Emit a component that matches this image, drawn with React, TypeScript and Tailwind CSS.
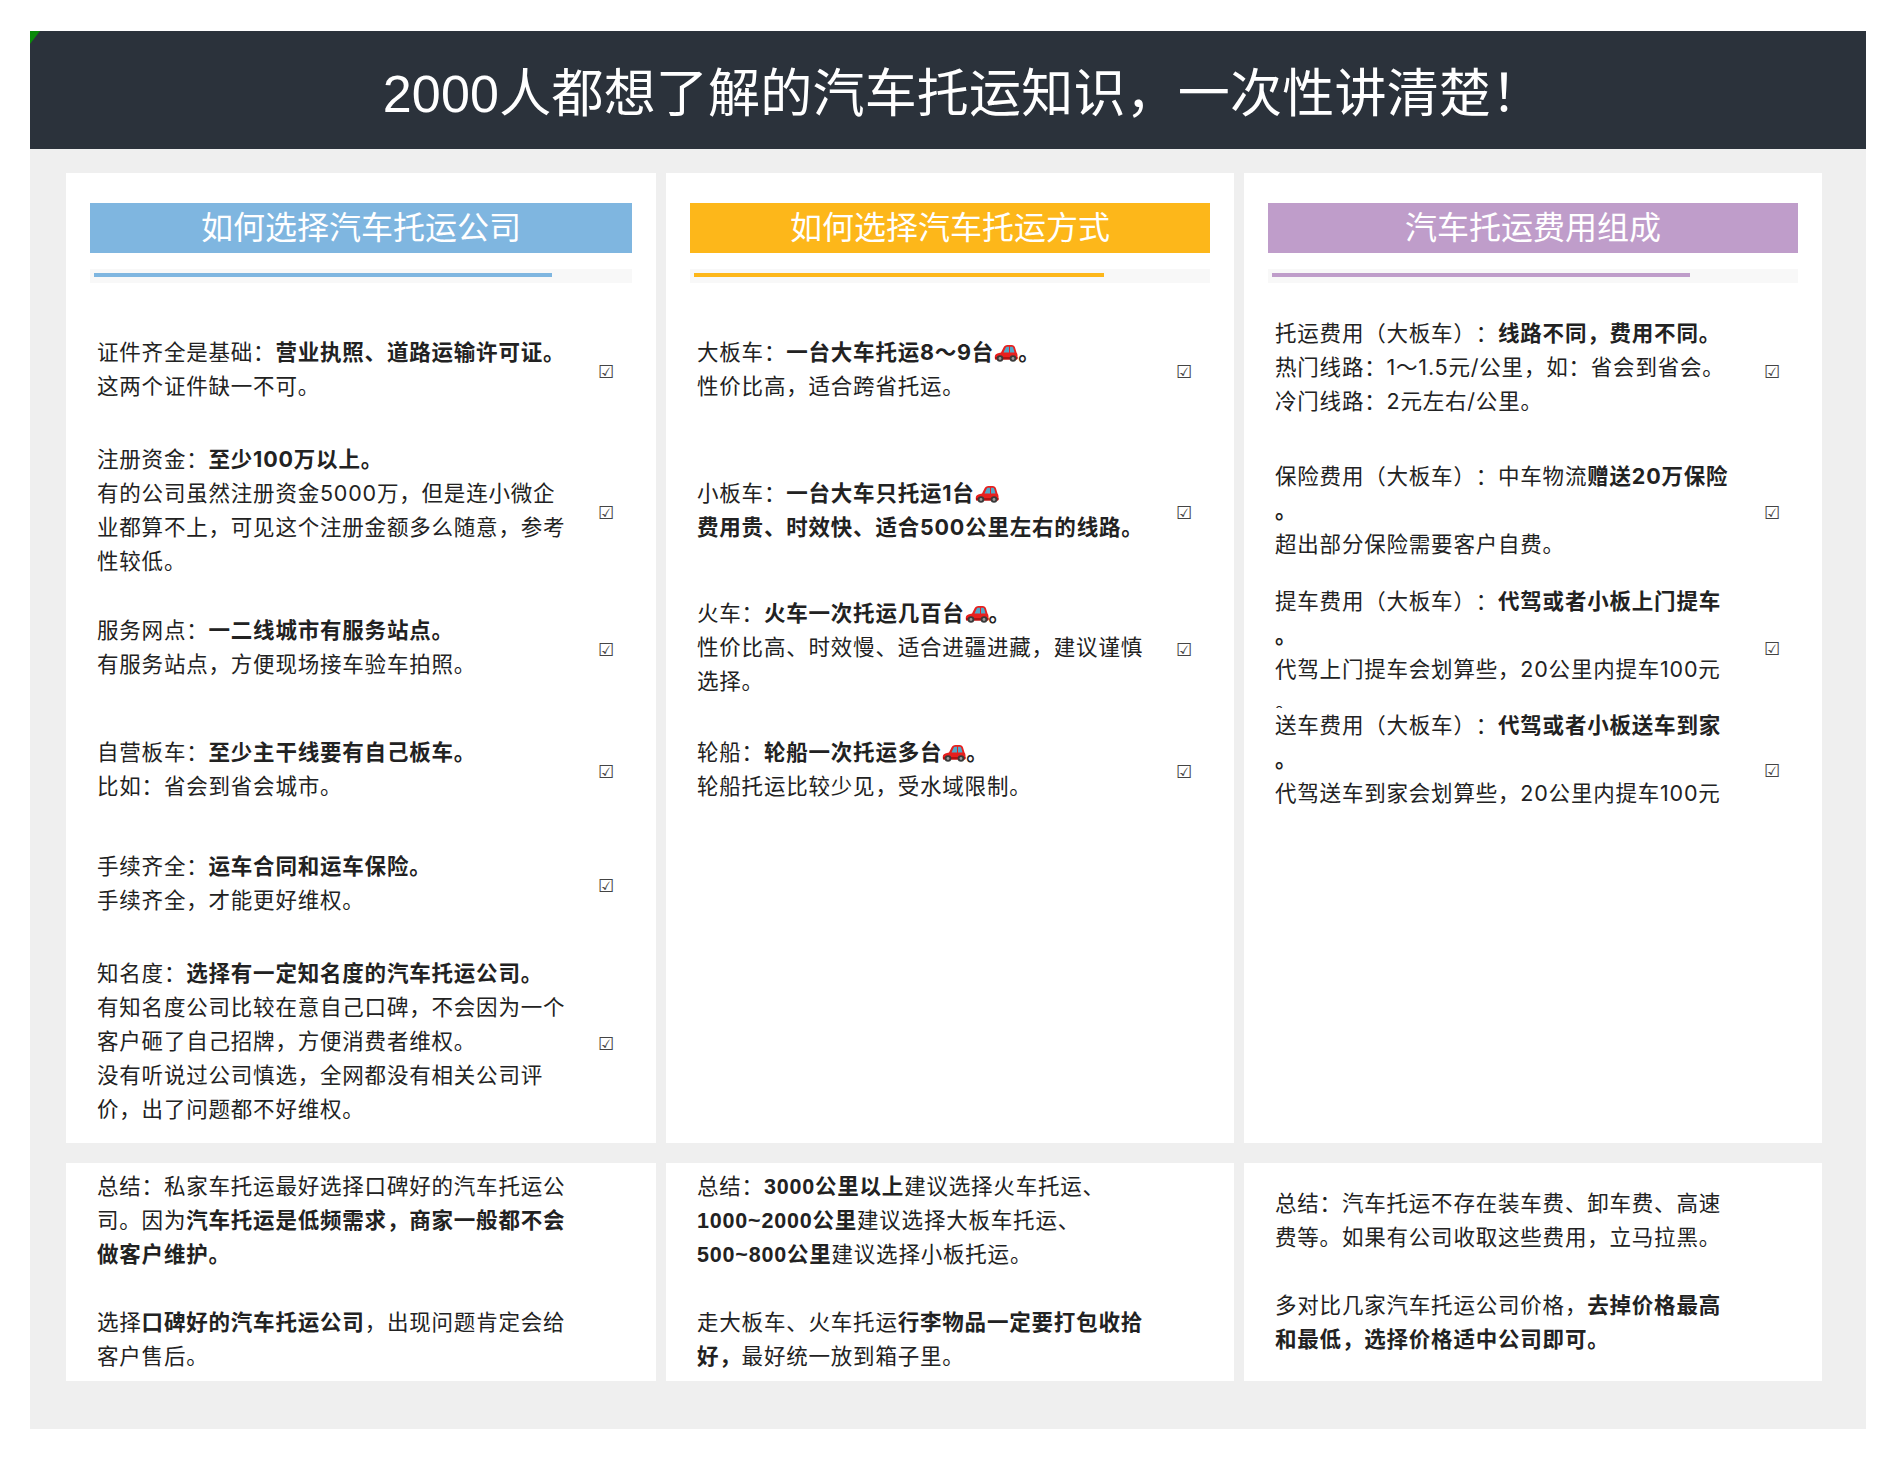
import type { ReactNode } from "react";

const Car = () => (
  <svg viewBox="0 0 24 18" className="inline-block w-[24px] h-[18px] align-[-2px]">
    <path d="M.8 12.500C.8 10.500 2.500 9.500 5 9l2-.5 2.500-5C10.200 2 11.500 1 13.500 1h4c2 0 3 1 3.500 2.500l1.500 5c.8 1 1 2 1 3.500v2c0 1-.5 1.500-1.500 1.500H2.300c-1 0-1.500-.5-1.500-1.500z" fill="#e8201e" />
    <path d="M9.500 8.500l2-4.500c.3-.8 1-1.200 2-1.200H15v5.700zM16 2.800h1.500c1 0 1.500.5 1.800 1.200l1.200 4.500H16z" fill="#52a8c8" />
    <path d="M1 13h22.500v1c0 1-.5 1.500-1.500 1.500H2.300c-1 0-1.300-.5-1.300-1.500z" fill="#b01210" />
    <circle cx="6" cy="14.500" r="3.300" fill="#3a3a3a" />
    <circle cx="6" cy="14.500" r="1.400" fill="#9a9a9a" />
    <circle cx="19" cy="14.500" r="3.300" fill="#3a3a3a" />
    <circle cx="19" cy="14.500" r="1.400" fill="#9a9a9a" />
  </svg>
);

const Check = ({ className = "" }: { className?: string }) => (
  <span className={`font-['DejaVu_Sans',sans-serif] text-[18px] leading-none text-[#444] tracking-normal ${className}`}>☑</span>
);

const Row = ({ h, x, children, textClass = "mb-[2px]", checkClass = "mt-[3px]" }: { h: string; x: string; children: ReactNode; textClass?: string; checkClass?: string }) => (
  <div className={`flex items-center justify-between overflow-hidden ${h} ${x}`}>
    <div className={`whitespace-nowrap ${textClass}`}>{children}</div>
    <Check className={checkClass} />
  </div>
);

const Head = ({ title, bar, fill, w }: { title: string; bar: string; fill: string; w: string }) => (
  <>
    <div className={`h-[50px] flex items-center justify-center text-white text-[32px] tracking-normal ${bar}`}>{title}</div>
    <div className="mt-[16px] mb-[15px] h-[14px] bg-[#f8f8f8] pt-[4px] pl-[4px]">
      <div className={`h-[4px] ${fill} ${w}`} />
    </div>
  </>
);

const Summary = ({ children }: { children: ReactNode }) => (
  <div className="bg-white flex items-center pl-[31px] whitespace-nowrap font-['Liberation_Sans','Noto_Sans_CJK_SC',sans-serif]">
    <div>{children}</div>
  </div>
);

export default function App() {
  return (
    <div className="min-h-screen bg-white pt-[31px] pl-[30px] font-['Inter','Noto_Sans_CJK_SC',sans-serif] text-[21.5px] leading-[34px] tracking-[0.8px] text-[#222] [text-spacing-trim:space-all]">
      <div className="relative w-[1836px] h-[1398px] bg-[#efefef]">
        <svg viewBox="0 0 10 13" className="absolute left-0 top-0 w-[10px] h-[13px]">
          <path d="M0 0h10L0 13z" fill="#0a8a0a" />
        </svg>
        <div className="h-[118px] bg-[#2b323b] pt-[8px] pl-[30px] flex items-center justify-center font-['Liberation_Sans','Noto_Sans_CJK_SC',sans-serif] text-white text-[52px] leading-none tracking-[0.2px]">
          2000人都想了解的汽车托运知识，一次性讲清楚！
        </div>

        <div className="grid grid-cols-[590px_568px_578px] grid-rows-[970px_218px] gap-x-[10px] gap-y-[20px] pt-[24px] pl-[36px]">
          <div className="bg-white pt-[30px] px-[24px]">
            <Head title="如何选择汽车托运公司" bar="bg-[#7fb6e0]" fill="bg-[#7fb6e0]" w="w-[458px]" />
            <Row h="h-[144px]" x="pl-[7px] pr-[18px]">
              证件齐全是基础：<b>营业执照、道路运输许可证。</b><br />这两个证件缺一不可。
            </Row>
            <Row h="h-[138px]" x="pl-[7px] pr-[18px]">
              注册资金：<b>至少100万以上。</b><br />有的公司虽然注册资金5000万，但是连小微企<br />业都算不上，可见这个注册金额多么随意，参考<br />性较低。
            </Row>
            <Row h="h-[136px]" x="pl-[7px] pr-[18px]">
              服务网点：<b>一二线城市有服务站点。</b><br />有服务站点，方便现场接车验车拍照。
            </Row>
            <Row h="h-[108px]" x="pl-[7px] pr-[18px]">
              自营板车：<b>至少主干线要有自己板车。</b><br />比如：省会到省会城市。
            </Row>
            <Row h="h-[120px]" x="pl-[7px] pr-[18px]">
              手续齐全：<b>运车合同和运车保险。</b><br />手续齐全，才能更好维权。
            </Row>
            <Row h="h-[196px]" x="pl-[7px] pr-[18px]">
              知名度：<b>选择有一定知名度的汽车托运公司。</b><br />有知名度公司比较在意自己口碑，不会因为一个<br />客户砸了自己招牌，方便消费者维权。<br />没有听说过公司慎选，全网都没有相关公司评<br />价，出了问题都不好维权。
            </Row>
          </div>

          <div className="bg-white pt-[30px] px-[24px]">
            <Head title="如何选择汽车托运方式" bar="bg-[#fdb71a]" fill="bg-[#fdb71a]" w="w-[410px]" />
            <Row h="h-[144px]" x="pl-[7px] pr-[18px]">
              大板车：<b>一台大车托运8～9台<Car />。</b><br />性价比高，适合跨省托运。
            </Row>
            <Row h="h-[138px]" x="pl-[7px] pr-[18px]">
              小板车：<b>一台大车只托运1台<Car /></b><br /><b>费用贵、时效快、适合500公里左右的线路。</b>
            </Row>
            <Row h="h-[136px]" x="pl-[7px] pr-[18px]">
              火车：<b>火车一次托运几百台<Car />。</b><br />性价比高、时效慢、适合进疆进藏，建议谨慎<br />选择。
            </Row>
            <Row h="h-[108px]" x="pl-[7px] pr-[18px]">
              轮船：<b>轮船一次托运多台<Car />。</b><br />轮船托运比较少见，受水域限制。
            </Row>
          </div>

          <div className="bg-white pt-[30px] px-[24px]">
            <Head title="汽车托运费用组成" bar="bg-[#bf9dca]" fill="bg-[#bf9dca]" w="w-[418px]" />
            <Row h="h-[144px]" x="pl-[7px] pr-[18px]" textClass="mb-[6px]">
              托运费用（大板车）：<b>线路不同，费用不同。</b><br />热门线路：1～1.5元/公里，如：省会到省会。<br />冷门线路：2元左右/公里。
            </Row>
            <Row h="h-[138px]" x="pl-[7px] pr-[18px]" textClass="mb-[3px]">
              保险费用（大板车）：中车物流<b>赠送20万保险</b><br /><b>。</b><br />超出部分保险需要客户自费。
            </Row>
            <Row h="h-[128px]" x="pl-[7px] pr-[18px]" textClass="self-start mt-[4px]" checkClass="mt-[10px]">
              提车费用（大板车）：<b>代驾或者小板上门提车</b><br /><b>。</b><br />代驾上门提车会划算些，20公里内提车100元<br />。
            </Row>
            <Row h="h-[124px]" x="pl-[7px] pr-[18px]" textClass="self-start" checkClass="mt-[2px]">
              送车费用（大板车）：<b>代驾或者小板送车到家</b><br /><b>。</b><br />代驾送车到家会划算些，20公里内提车100元
            </Row>
          </div>

          <Summary>
            总结：私家车托运最好选择口碑好的汽车托运公<br />司。因为<b>汽车托运是低频需求，商家一般都不会</b><br /><b>做客户维护。</b><br /><br />选择<b>口碑好的汽车托运公司</b>，出现问题肯定会给<br />客户售后。
          </Summary>
          <Summary>
            总结：<b>3000公里以上</b>建议选择火车托运、<br /><b>1000~2000公里</b>建议选择大板车托运、<br /><b>500~800公里</b>建议选择小板托运。<br /><br />走大板车、火车托运<b>行李物品一定要打包收拾</b><br /><b>好，</b>最好统一放到箱子里。
          </Summary>
          <Summary>
            总结：汽车托运不存在装车费、卸车费、高速<br />费等。如果有公司收取这些费用，立马拉黑。<br /><br />多对比几家汽车托运公司价格，<b>去掉价格最高</b><br /><b>和最低，选择价格适中公司即可。</b>
          </Summary>
        </div>
      </div>
    </div>
  );
}
